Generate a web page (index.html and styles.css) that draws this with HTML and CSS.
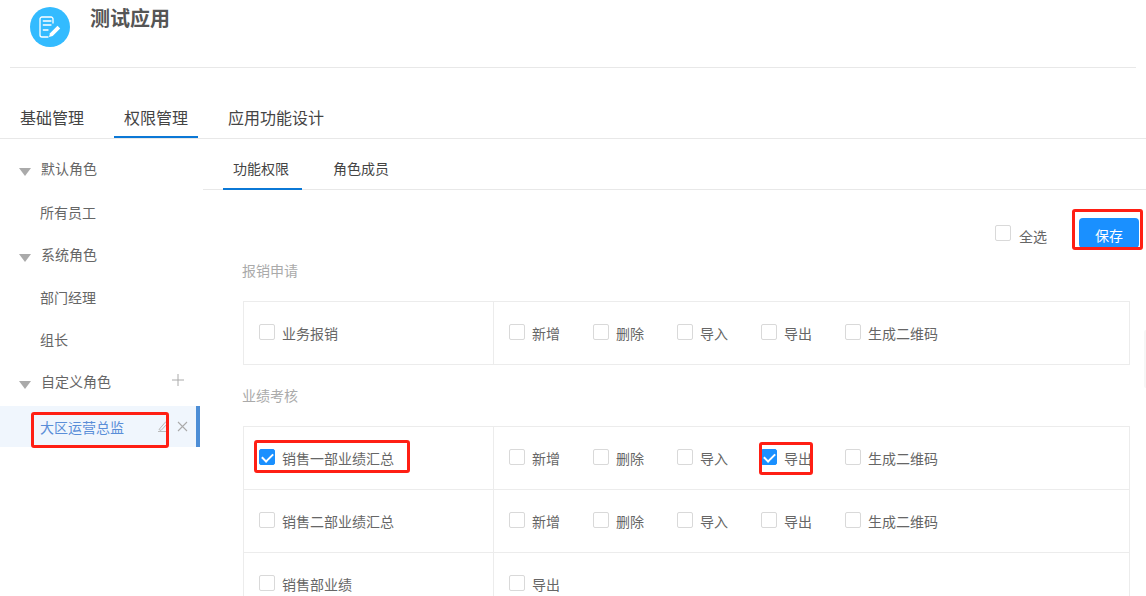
FILE: index.html
```html
<!DOCTYPE html>
<html lang="zh-CN">
<head>
<meta charset="utf-8">
<title>测试应用</title>
<link rel="stylesheet" href="styles.css">
</head>
<body>
<div class="page">
  <header class="app-header">
    <span class="app-icon">
      <svg width="24" height="24" viewBox="0 0 24 24" fill="none" stroke="#fff" stroke-width="1.3" stroke-linecap="round" stroke-linejoin="round">
        <path d="M15 8V4a2 2 0 0 0-2-2H4a2 2 0 0 0-2 2v16a2 2 0 0 0 2 2h6"/>
        <path d="M5.3 6h7.7M5.3 10h7.7M5.3 15h4.7"/>
        <path d="M11 22l1-3.7 7.5-7.5 2.7 2.7-7.5 7.5z" fill="#fff" stroke="none"/>
      </svg>
    </span>
    <h1 class="app-title">测试应用</h1>
  </header>

  <nav class="main-tabs">
    <a class="main-tab">基础管理</a>
    <a class="main-tab is-active">权限管理</a>
    <a class="main-tab">应用功能设计</a>
  </nav>

  <div class="content">
    <aside class="sidebar">
      <div class="group"><i class="caret"></i><span>默认角色</span></div>
      <div class="role first">所有员工</div>
      <div class="group"><i class="caret"></i><span>系统角色</span></div>
      <div class="role">部门经理</div>
      <div class="role">组长</div>
      <div class="group custom"><i class="caret"></i><span>自定义角色</span>
        <svg class="plus" width="12" height="12" viewBox="0 0 12 12" stroke="#aaa" stroke-width="1"><path d="M6 0v12M0 6h12"/></svg>
      </div>
      <div class="role is-active">
        <span class="role-name">大区运营总监</span>
        <svg class="edit" width="12" height="12" viewBox="0 0 12 12" fill="none" stroke="#bbb" stroke-width="1"><path d="M1 9.5 7.5 2l2 1.5L3 10.5zM0 11.5h11"/></svg>
        <svg class="close" width="11" height="11" viewBox="0 0 11 11" stroke="#aaa" stroke-width="1.1"><path d="M1 1l9 9M10 1l-9 9"/></svg>
      </div>
    </aside>

    <main class="panel">
      <nav class="sub-tabs">
        <a class="sub-tab is-active">功能权限</a>
        <a class="sub-tab">角色成员</a>
      </nav>

      <div class="toolbar">
        <label class="check"><i class="box"></i><span>全选</span></label>
        <button class="save">保存</button>
      </div>

      <h2 class="section-title first">报销申请</h2>
      <div class="table">
        <div class="row">
          <div class="cell-name"><label class="check"><i class="box"></i><span>业务报销</span></label></div>
          <div class="cell-ops">
            <label class="check op"><i class="box"></i><span>新增</span></label>
            <label class="check op"><i class="box"></i><span>删除</span></label>
            <label class="check op"><i class="box"></i><span>导入</span></label>
            <label class="check op"><i class="box"></i><span>导出</span></label>
            <label class="check op"><i class="box"></i><span>生成二维码</span></label>
          </div>
        </div>
      </div>

      <h2 class="section-title">业绩考核</h2>
      <div class="table">
        <div class="row">
          <div class="cell-name"><label class="check"><i class="box is-checked"></i><span>销售一部业绩汇总</span></label></div>
          <div class="cell-ops">
            <label class="check op"><i class="box"></i><span>新增</span></label>
            <label class="check op"><i class="box"></i><span>删除</span></label>
            <label class="check op"><i class="box"></i><span>导入</span></label>
            <label class="check op"><i class="box is-checked"></i><span>导出</span></label>
            <label class="check op"><i class="box"></i><span>生成二维码</span></label>
          </div>
        </div>
        <div class="row">
          <div class="cell-name"><label class="check"><i class="box"></i><span>销售二部业绩汇总</span></label></div>
          <div class="cell-ops">
            <label class="check op"><i class="box"></i><span>新增</span></label>
            <label class="check op"><i class="box"></i><span>删除</span></label>
            <label class="check op"><i class="box"></i><span>导入</span></label>
            <label class="check op"><i class="box"></i><span>导出</span></label>
            <label class="check op"><i class="box"></i><span>生成二维码</span></label>
          </div>
        </div>
        <div class="row">
          <div class="cell-name"><label class="check"><i class="box"></i><span>销售部业绩</span></label></div>
          <div class="cell-ops">
            <label class="check op"><i class="box"></i><span>导出</span></label>
          </div>
        </div>
      </div>
    </main>
  </div>

  <i class="scroll-thumb"></i>
  <i class="mark mark-save"></i>
  <i class="mark mark-role"></i>
  <i class="mark mark-row"></i>
  <i class="mark mark-export"></i>
</div>
</body>
</html>
```

FILE: styles.css
```css
* { box-sizing: border-box; }
html, body { margin: 0; padding: 0; background: #fff; }
body { font-family: "Noto Sans CJK SC", "Liberation Sans", sans-serif; color: #666; font-size: 14px; }
.page { position: relative; width: 1146px; height: 596px; overflow: hidden; }

.app-header { height: 68px; margin: 0 10px; border-bottom: 1px solid #e8e8e8; display: flex; align-items: flex-start; padding: 7px 0 0 20px; }
.app-icon { width: 40px; height: 40px; border-radius: 50%; background: #33bbff; display: flex; align-items: center; justify-content: center; }
.app-title { margin: -3px 0 0 20px; font-size: 20px; line-height: 28px; font-weight: 700; color: #555; }

.main-tabs { height: 71px; border-bottom: 1px solid #e8e8e8; display: flex; align-items: flex-end; gap: 20px; padding-left: 10px; }
.main-tab { height: 40px; padding: 0 10px; font-size: 16px; line-height: 38px; color: #444; display: block; border-bottom: 2px solid transparent; }
.main-tab.is-active { border-bottom-color: #0b78d6; }

.content { display: flex; align-items: flex-start; }
.sidebar { width: 200px; flex: none; padding-top: 8px; }
.group { height: 42.5px; display: flex; align-items: center; padding-left: 19px; }
.group.custom { padding-bottom: 1px; }
.caret { width: 0; height: 0; border-left: 6.5px solid transparent; border-right: 6.5px solid transparent; border-top: 8px solid #aaa; margin-top: 8px; margin-right: 10px; }
.plus { margin-left: 61px; margin-top: -2px; }
.role { height: 42.5px; display: flex; align-items: center; padding-left: 40px; color: #666; }
.role.first { margin-top: 1px; }
.role.is-active { height: 41px; margin-top: 3px; background: #f0f6fd; border-right: 4px solid #4d8ed6; color: #5a8ed8; }
.role-name { width: 118px; }
.edit { margin-top: -1px; }
.close { margin-left: 7px; }

.panel { flex: 1; min-width: 0; padding-left: 3px; }
.sub-tabs { height: 51px; border-bottom: 1px solid #e8e8e8; display: flex; padding-left: 20px; }
.sub-tab { height: 51px; width: 79px; padding-left: 10px; color: #444; border-bottom: 2px solid transparent; margin-right: 21px; font-size: 14px; line-height: 59px; white-space: nowrap; }
.sub-tab.is-active { border-bottom-color: #0b78d6; }

.toolbar { height: 55px; display: flex; justify-content: flex-end; align-items: flex-start; padding: 28px 7px 0 0; }
.toolbar .check { margin-top: 7px; margin-right: 32px; }
.toolbar .check span { margin-top: 1px; margin-left: 8px; }
.save { width: 60px; height: 30px; border: 0; border-radius: 4px; background: #1a90ff; color: #fff; font: inherit; padding: 4px 0 0; }

.section-title { height: 20px; margin: 20px 0 21px; font-size: 14px; font-weight: 400; line-height: 20px; color: #aaa; padding-left: 39px; }
.section-title.first { margin-top: 15px; }

.table { margin: 0 16px 0 40px; border: 1px solid #ececec; border-bottom: 0; }
.row { display: grid; grid-template-columns: 250px 1fr; height: 63px; border-bottom: 1px solid #ececec; }
.cell-name { display: flex; align-items: center; padding-left: 15px; border-right: 1px solid #ececec; }
.cell-ops { display: flex; align-items: center; padding-left: 15px; }
.check { display: inline-flex; align-items: flex-start; }
.check span { line-height: 20px; margin-left: 7px; margin-top: -1px; color: #666; }
.op { width: 84px; flex: none; white-space: nowrap; }
.box { width: 16px; height: 16px; flex: none; border: 1px solid #d9d9d9; border-radius: 2px; background: #fff; position: relative; display: block; }
.box.is-checked { background: #1a90ff; border-color: #1a90ff; }
.box.is-checked::after { content: ""; position: absolute; left: 4px; top: 1px; width: 5px; height: 9px; border: solid #fff; border-width: 0 2px 2px 0; transform: rotate(45deg); }

.scroll-thumb { position: absolute; left: 1144px; top: 330px; width: 4px; height: 58px; border-radius: 2px; background: #f6f6f6; display: block; }
.mark { position: absolute; border: 3px solid #ff1f14; border-radius: 3px; display: block; }
.mark-save { left: 1072px; top: 209px; width: 71px; height: 41px; }
.mark-role { left: 31px; top: 412px; width: 138px; height: 36px; }
.mark-row { left: 254px; top: 440px; width: 156px; height: 33px; }
.mark-export { left: 759px; top: 442px; width: 54px; height: 33px; }
```
